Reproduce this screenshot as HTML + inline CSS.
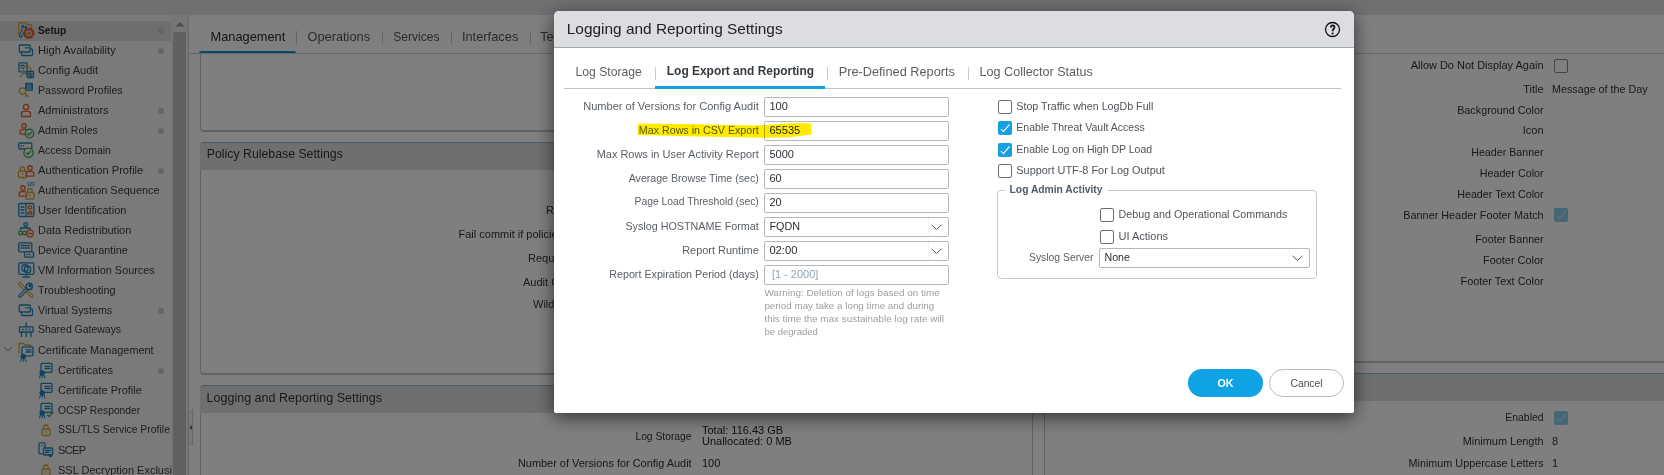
<!DOCTYPE html>
<html><head><meta charset="utf-8"><style>
html,body{margin:0;padding:0;width:1664px;height:475px;overflow:hidden;background:#fff;font-family:"Liberation Sans", sans-serif;}
.t{position:absolute;white-space:nowrap;line-height:1;}
.r{position:absolute;box-sizing:border-box;}
svg{position:absolute;overflow:visible;}
</style></head><body>
<div class="r" style="left:0px;top:0px;width:1664px;height:15px;background:#dfe1e4"></div><div class="r" style="left:0px;top:15px;width:171px;height:460px;background:#f5f5f5"></div><div class="r" style="left:0px;top:21px;width:171px;height:20px;background:#dcdcdc"></div><div class="r" style="left:171px;top:15px;width:17px;height:460px;background:#ededed"></div><div class="r" style="left:173px;top:32px;width:13px;height:443px;background:#c2c2c2"></div><svg style="left:174px;top:20px" width="12" height="8"><path d="M1.5 6.5 L6 2 L10.5 6.5 Z" fill="#999"/></svg><div class="r" style="left:188px;top:15px;width:1px;height:460px;background:#d4d4d4"></div><svg style="left:188px;top:408px" width="8" height="40"><path d="M0.5 6 L4.5 1.5 L4.5 37.5 L0.5 33.5 Z" fill="#f4f4f4" stroke="#cfcfcf"/><path d="M1.3 19.5 L4 17 L4 22 Z" fill="#666"/></svg><div style="position:absolute;left:0;top:15px;width:172px;height:460px;overflow:hidden"><div class="t" style="left:38px;top:10.67px;font-size:10.19px;color:#2b2b2b;font-weight:bold;">Setup</div><div class="r" style="left:158px;top:13.3px;width:6px;height:6px;border-radius:3px;background:#c8c8c8"></div><div class="t" style="left:38px;top:29.87px;font-size:11.14px;color:#3a3a3a;font-weight:normal;">High Availability</div><div class="r" style="left:158px;top:33.3px;width:6px;height:6px;border-radius:3px;background:#c8c8c8"></div><div class="t" style="left:38px;top:49.88px;font-size:11.13px;color:#3a3a3a;font-weight:normal;">Config Audit</div><div class="t" style="left:38px;top:70.35px;font-size:10.57px;color:#3a3a3a;font-weight:normal;">Password Profiles</div><div class="t" style="left:38px;top:89.94px;font-size:11.06px;color:#3a3a3a;font-weight:normal;">Administrators</div><div class="r" style="left:158px;top:93.3px;width:6px;height:6px;border-radius:3px;background:#c8c8c8"></div><div class="t" style="left:38px;top:110.37px;font-size:10.55px;color:#3a3a3a;font-weight:normal;">Admin Roles</div><div class="r" style="left:158px;top:113.3px;width:6px;height:6px;border-radius:3px;background:#c8c8c8"></div><div class="t" style="left:38px;top:130.40px;font-size:10.51px;color:#3a3a3a;font-weight:normal;">Access Domain</div><div class="t" style="left:38px;top:149.86px;font-size:11.15px;color:#3a3a3a;font-weight:normal;">Authentication Profile</div><div class="r" style="left:158px;top:153.3px;width:6px;height:6px;border-radius:3px;background:#c8c8c8"></div><div class="t" style="left:38px;top:170.03px;font-size:10.95px;color:#3a3a3a;font-weight:normal;">Authentication Sequence</div><div class="t" style="left:38px;top:189.95px;font-size:11.05px;color:#3a3a3a;font-weight:normal;">User Identification</div><div class="t" style="left:38px;top:210.01px;font-size:10.98px;color:#3a3a3a;font-weight:normal;">Data Redistribution</div><div class="t" style="left:38px;top:230.12px;font-size:10.84px;color:#3a3a3a;font-weight:normal;">Device Quarantine</div><div class="t" style="left:38px;top:250.07px;font-size:10.9px;color:#3a3a3a;font-weight:normal;">VM Information Sources</div><div class="t" style="left:38px;top:270.11px;font-size:10.86px;color:#3a3a3a;font-weight:normal;">Troubleshooting</div><div class="t" style="left:38px;top:290.23px;font-size:10.71px;color:#3a3a3a;font-weight:normal;">Virtual Systems</div><div class="r" style="left:158px;top:293.3px;width:6px;height:6px;border-radius:3px;background:#c8c8c8"></div><div class="t" style="left:38px;top:310.45px;font-size:10.46px;color:#3a3a3a;font-weight:normal;">Shared Gateways</div><div class="t" style="left:38px;top:330.07px;font-size:10.9px;color:#3a3a3a;font-weight:normal;">Certificate Management</div><div class="t" style="left:58px;top:349.99px;font-size:11.0px;color:#3a3a3a;font-weight:normal;">Certificates</div><div class="r" style="left:158px;top:353.3px;width:6px;height:6px;border-radius:3px;background:#c8c8c8"></div><div class="t" style="left:58px;top:369.96px;font-size:11.03px;color:#3a3a3a;font-weight:normal;">Certificate Profile</div><div class="t" style="left:58px;top:390.57px;font-size:10.31px;color:#3a3a3a;font-weight:normal;">OCSP Responder</div><div class="t" style="left:58px;top:410.46px;font-size:10.44px;color:#3a3a3a;font-weight:normal;">SSL/TLS Service Profile</div><div class="t" style="left:58px;top:429.99px;font-size:11px;color:#3a3a3a;font-weight:normal;letter-spacing:-0.6px">SCEP</div><div class="t" style="left:58px;top:449.99px;font-size:11px;color:#3a3a3a;font-weight:normal;">SSL Decryption Exclusion</div></div><div style="position:absolute;left:0;top:15px;width:172px;height:460px;overflow:hidden"><div style="position:absolute;left:0;top:-15px"><svg style="left:18px;top:21.6px" width="17" height="17" fill="none" stroke-width="1.3" stroke-linecap="round" stroke-linejoin="round"><path d="M0.6 12 V0.8 H8.2 L9.2 2.7 H13.6 V8" stroke="#d6a23a" stroke-width="1.2"/><path d="M1.2 14.2 L4.3 6.6 Q3.4 4.4 5.2 3.3 L5.6 5.2 L7 5.5 L7.6 3.9 Q9.2 5.6 7.6 7.6 L3.2 15.3 Z" stroke="#1d84bc" stroke-width="1.1" fill="#dcdcdc"/><circle cx="10.9" cy="11.2" r="4.7" stroke="#e4602c" stroke-width="2" stroke-dasharray="1.7 2.0"/><circle cx="10.9" cy="11.2" r="3.5" stroke="#e4602c" stroke-width="1.3" fill="#dcdcdc"/><circle cx="10.9" cy="11.2" r="1.2" stroke="#e4602c" stroke-width="1.1"/></svg><svg style="left:18px;top:41.6px" width="17" height="17" fill="none" stroke-width="1.3" stroke-linecap="round" stroke-linejoin="round"><rect x="1.2" y="3" width="11" height="7" rx="1" stroke="#1d84bc"/><path d="M3.5 10 V12.5 Q3.5 13.5 4.5 13.5 H13.5 Q14.5 13.5 14.5 12.5 V8 Q14.5 7 13.5 7 H12.5" stroke="#1d84bc"/><rect x="7" y="5" width="1.6" height="1.6" fill="#36a848" stroke="none"/><rect x="9.3" y="5" width="1.6" height="1.6" fill="#36a848" stroke="none"/></svg><svg style="left:18px;top:61.6px" width="17" height="17" fill="none" stroke-width="1.3" stroke-linecap="round" stroke-linejoin="round"><rect x="1" y="0.8" width="8" height="9" rx="0.8" stroke="#1d84bc"/><path d="M3 3.5 H6 M3 5.8 H5" stroke="#1d84bc"/><circle cx="9" cy="8" r="3.8" stroke="#d6a23a"/><path d="M6.2 10.8 L2.5 14.5" stroke="#d6a23a"/><rect x="9" y="9.5" width="6.5" height="6" rx="0.8" stroke="#1d84bc"/><path d="M10.8 12 H14 M10.8 14 H14" stroke="#1d84bc"/></svg><svg style="left:18px;top:81.6px" width="17" height="17" fill="none" stroke-width="1.3" stroke-linecap="round" stroke-linejoin="round"><rect x="7" y="0.8" width="8" height="8" rx="0.8" fill="#1d84bc" stroke="none"/><path d="M9 3 H13 M9 5 H13 M9 7 H13" stroke="#f5f5f5" stroke-width="0.8"/><circle cx="4.5" cy="9" r="3.2" stroke="#d6a23a"/><path d="M6.8 11.3 L10 14.5 M8.5 13 L7.3 14.2" stroke="#d6a23a"/></svg><svg style="left:18px;top:101.6px" width="17" height="17" fill="none" stroke-width="1.3" stroke-linecap="round" stroke-linejoin="round"><circle cx="8" cy="4.9" r="2.6" stroke="#e4602c"/><path d="M3.5 14.5 V11.5 Q3.5 9.3 6.0 9.3 H10.0 Q12.5 9.3 12.5 11.5 V14.5 Z" stroke="#e4602c"/></svg><svg style="left:18px;top:121.6px" width="17" height="17" fill="none" stroke-width="1.3" stroke-linecap="round" stroke-linejoin="round"><circle cx="6" cy="3.94" r="2.21" stroke="#e4602c"/><path d="M2.1750000000000003 12.1 V9.55 Q2.1750000000000003 7.68 4.3 7.68 H7.7 Q9.825 7.68 9.825 9.55 V12.1 Z" stroke="#e4602c"/><circle cx="11.5" cy="11.5" r="4.3" stroke="#36a848" fill="#f5f5f5"/><path d="M9.5 11.5 L10.9 13.1 L13.7 9.9" stroke="#36a848"/></svg><svg style="left:18px;top:141.6px" width="17" height="17" fill="none" stroke-width="1.3" stroke-linecap="round" stroke-linejoin="round"><rect x="0.8" y="1" width="13" height="6" rx="1" stroke="#1d84bc"/><path d="M2.8 3.8 H3.6 M5 3.8 H5.8" stroke="#1d84bc"/><circle cx="10.5" cy="10.8" r="4.6" stroke="#36a848" fill="#f5f5f5"/><path d="M8.5 10.8 L9.9 12.4 L12.7 9.200000000000001" stroke="#36a848"/></svg><svg style="left:18px;top:161.6px" width="17" height="17" fill="none" stroke-width="1.3" stroke-linecap="round" stroke-linejoin="round"><path d="M2.3 9 V7.6 Q2.3 5 4.5 5 Q6.7 5 6.7 7.6 V9" stroke="#d6a23a"/><rect x="0.5" y="9" width="8" height="6.5" rx="1" stroke="#d6a23a"/><circle cx="4.5" cy="12" r="0.9" fill="#d6a23a" stroke="none"/><circle cx="12" cy="5.9399999999999995" r="2.21" stroke="#e4602c"/><path d="M8.175 14.1 V11.55 Q8.175 9.68 10.3 9.68 H13.7 Q15.825 9.68 15.825 11.55 V14.1 Z" stroke="#e4602c"/></svg><svg style="left:18px;top:181.6px" width="17" height="17" fill="none" stroke-width="1.3" stroke-linecap="round" stroke-linejoin="round"><circle cx="5" cy="5.9399999999999995" r="2.21" stroke="#e4602c"/><path d="M1.1750000000000003 14.1 V11.55 Q1.1750000000000003 9.68 3.3 9.68 H6.7 Q8.825 9.68 8.825 11.55 V14.1 Z" stroke="#e4602c"/><path d="M9.8 10.5 V9.1 Q9.8 6.5 12 6.5 Q14.2 6.5 14.2 9.1 V10.5" stroke="#d6a23a"/><rect x="8" y="10.5" width="8" height="6.5" rx="1" stroke="#d6a23a"/><circle cx="12" cy="13.5" r="0.9" fill="#d6a23a" stroke="none"/><text x="9" y="4" font-size="4.5" fill="#1d84bc" font-family="Liberation Sans" stroke="none" font-weight="bold">123</text></svg><svg style="left:18px;top:201.6px" width="17" height="17" fill="none" stroke-width="1.3" stroke-linecap="round" stroke-linejoin="round"><rect x="0.8" y="1.5" width="15" height="13" rx="1" stroke="#1d84bc"/><path d="M8 1.5 V14.5 M3 5 H6 M3 8 H6 M3 11 H6" stroke="#1d84bc"/><circle cx="12" cy="5.5" r="1.7" stroke="#e4602c"/><path d="M9.8 12 Q9.8 9.5 12 9.5 Q14 9.5 14 12 H10.5" stroke="#e4602c"/></svg><svg style="left:18px;top:221.6px" width="17" height="17" fill="none" stroke-width="1.3" stroke-linecap="round" stroke-linejoin="round"><rect x="6" y="0.8" width="3.5" height="3" rx="0.6" stroke="#1d84bc"/><path d="M7.7 3.8 V6 M2.5 8 V6 H12 V8" stroke="#1d84bc"/><circle cx="2.5" cy="11" r="1.8" stroke="#36a848"/><circle cx="6.5" cy="11" r="1.8" stroke="#36a848"/><circle cx="12" cy="11.5" r="3.3" stroke="#e4602c" fill="#f5f5f5"/><path d="M10.5 11.5 H13.5" stroke="#e4602c"/></svg><svg style="left:18px;top:241.6px" width="17" height="17" fill="none" stroke-width="1.3" stroke-linecap="round" stroke-linejoin="round"><rect x="0.8" y="0.8" width="13" height="9" rx="1" stroke="#1d84bc"/><path d="M3 3.5 H11.5 M3 6 H11.5" stroke="#1d84bc" stroke-dasharray="0.9 1.1"/><rect x="6.5" y="9.8" width="9" height="5.4" rx="1" stroke="#1d84bc" fill="#f5f5f5"/><path d="M9 12.5 H9.8 M11.5 12.5 H12.3" stroke="#1d84bc"/></svg><svg style="left:18px;top:261.6px" width="17" height="17" fill="none" stroke-width="1.3" stroke-linecap="round" stroke-linejoin="round"><rect x="0.8" y="0.8" width="15" height="11.5" rx="1" stroke="#1d84bc"/><path d="M8.2 12.3 V14.5 M5 15 H11.5" stroke="#1d84bc"/><rect x="4" y="3" width="6" height="6" rx="1.5" stroke="#1d84bc"/><rect x="6.5" y="4.5" width="6" height="6" rx="1.5" stroke="#1d84bc"/></svg><svg style="left:18px;top:281.6px" width="17" height="17" fill="none" stroke-width="1.3" stroke-linecap="round" stroke-linejoin="round"><path d="M1.8 2 L13.8 14" stroke="#d6a23a" stroke-width="3.6"/><path d="M1.8 2 L13.8 14" stroke="#f5f5f5" stroke-width="1.2"/><path d="M2 14 L8.5 7.5" stroke="#1d84bc" stroke-width="3.6"/><path d="M2 14 L8.5 7.5" stroke="#f5f5f5" stroke-width="1.2"/><circle cx="11.2" cy="4.4" r="3.1" stroke="#1d84bc" stroke-width="1.5" fill="#f5f5f5"/><circle cx="12" cy="3.7" r="1.6" fill="#1d84bc" stroke="none"/></svg><svg style="left:18px;top:301.6px" width="17" height="17" fill="none" stroke-width="1.3" stroke-linecap="round" stroke-linejoin="round"><rect x="1.2" y="3" width="11" height="7" rx="1" stroke="#1d84bc"/><path d="M3.5 10 V12.5 Q3.5 13.5 4.5 13.5 H13.5 Q14.5 13.5 14.5 12.5 V8 Q14.5 7 13.5 7 H12.5" stroke="#1d84bc"/><rect x="7" y="5" width="1.6" height="1.6" fill="#36a848" stroke="none"/><rect x="9.3" y="5" width="1.6" height="1.6" fill="#36a848" stroke="none"/></svg><svg style="left:18px;top:321.6px" width="17" height="17" fill="none" stroke-width="1.3" stroke-linecap="round" stroke-linejoin="round"><path d="M8.2 0.8 V4.5 M1.5 4.8 H15 V10 H1.5 Z M3.5 10 V14.5 M8.2 10 V14.5 M13 10 V14.5" stroke="#1d84bc"/><circle cx="5" cy="7.4" r="0.9" fill="#1d84bc" stroke="none"/><circle cx="8.2" cy="7.4" r="0.9" fill="#1d84bc" stroke="none"/><circle cx="11.4" cy="7.4" r="0.9" fill="#1d84bc" stroke="none"/></svg><svg style="left:18px;top:341.6px" width="17" height="17" fill="none" stroke-width="1.3" stroke-linecap="round" stroke-linejoin="round"><path d="M1 11 V1.5 H5.5 L7 3 H12.5 V5" stroke="#d6a23a"/><rect x="4" y="4.8" width="11" height="9" rx="1" stroke="#1d84bc"/><path d="M8 7.8 H13 M8 10 H13" stroke="#1d84bc"/><circle cx="5.2" cy="14.5" r="2.7" fill="#1d84bc" stroke="none"/><path d="M3.5 16.5 L2.5 19.5 M5.2 17 V19.5 M7 16.5 L8 19.5" stroke="#1d84bc" stroke-width="1"/></svg><svg style="left:38px;top:361.6px" width="17" height="17" fill="none" stroke-width="1.3" stroke-linecap="round" stroke-linejoin="round"><rect x="3" y="1.3" width="11" height="9" rx="1" stroke="#1d84bc"/><path d="M7 4.3 H12 M7 6.5 H12" stroke="#1d84bc"/><circle cx="4.2" cy="11.0" r="2.7" fill="#1d84bc" stroke="none"/><path d="M2.5 13.0 L1.5 16.0 M4.2 13.5 V16.0 M6 13.0 L7 16.0" stroke="#1d84bc" stroke-width="1"/></svg><svg style="left:38px;top:381.6px" width="17" height="17" fill="none" stroke-width="1.3" stroke-linecap="round" stroke-linejoin="round"><rect x="3" y="1.3" width="11" height="9" rx="1" stroke="#1d84bc"/><path d="M7 4.3 H12 M7 6.5 H12" stroke="#1d84bc"/><circle cx="4.2" cy="11.0" r="2.7" fill="#1d84bc" stroke="none"/><path d="M2.5 13.0 L1.5 16.0 M4.2 13.5 V16.0 M6 13.0 L7 16.0" stroke="#1d84bc" stroke-width="1"/></svg><svg style="left:38px;top:401.6px" width="17" height="17" fill="none" stroke-width="1.3" stroke-linecap="round" stroke-linejoin="round"><rect x="3" y="1.3" width="11" height="9" rx="1" stroke="#1d84bc"/><path d="M7 4.3 H12 M7 6.5 H12" stroke="#1d84bc"/><circle cx="4.2" cy="11.0" r="2.7" fill="#1d84bc" stroke="none"/><path d="M2.5 13.0 L1.5 16.0 M4.2 13.5 V16.0 M6 13.0 L7 16.0" stroke="#1d84bc" stroke-width="1"/><path d="M9.5 13.0 L11 14.5 L15 10.5" stroke="#36a848"/></svg><svg style="left:38px;top:421.6px" width="17" height="17" fill="none" stroke-width="1.3" stroke-linecap="round" stroke-linejoin="round"><path d="M5.8 7 V5.6 Q5.8 3 8 3 Q10.2 3 10.2 5.6 V7" stroke="#d6a23a"/><rect x="4" y="7" width="8" height="6.5" rx="1" stroke="#d6a23a"/><circle cx="8" cy="10" r="0.9" fill="#d6a23a" stroke="none"/></svg><svg style="left:38px;top:441.6px" width="17" height="17" fill="none" stroke-width="1.3" stroke-linecap="round" stroke-linejoin="round"><rect x="1" y="0.8" width="6" height="11" rx="1" stroke="#1d84bc"/><circle cx="4" cy="3.5" r="0.8" fill="#1d84bc" stroke="none"/><rect x="5.5" y="6" width="9" height="7" rx="0.8" stroke="#1d84bc" fill="#f5f5f5"/><path d="M7.5 8.5 H12.5 M7.5 10.5 H11" stroke="#1d84bc"/><circle cx="12.5" cy="13.5" r="1.8" fill="#1d84bc" stroke="none"/></svg><svg style="left:38px;top:461.6px" width="17" height="17" fill="none" stroke-width="1.3" stroke-linecap="round" stroke-linejoin="round"><path d="M5.8 7 V5.6 Q5.8 3 8 3 Q10.2 3 10.2 5.6 V7" stroke="#d6a23a"/><rect x="4" y="7" width="8" height="6.5" rx="1" stroke="#d6a23a"/><circle cx="8" cy="10" r="0.9" fill="#d6a23a" stroke="none"/></svg></div></div><svg style="left:3px;top:346px" width="10" height="7"><path d="M1 1 L5 5 L9 1" fill="none" stroke="#888" stroke-width="1"/></svg><div class="t" style="left:210.5px;top:30.56px;font-size:12.8px;color:#2a2a2a;font-weight:normal;">Management</div><div class="t" style="left:307.5px;top:30.56px;font-size:12.8px;color:#555;font-weight:normal;">Operations</div><div class="t" style="left:393.2px;top:31.16px;font-size:12.1px;color:#555;font-weight:normal;">Services</div><div class="t" style="left:461.9px;top:30.51px;font-size:12.87px;color:#555;font-weight:normal;">Interfaces</div><div class="t" style="left:540.2px;top:30.56px;font-size:12.8px;color:#555;font-weight:normal;">Telemetry</div><div class="r" style="left:296px;top:31px;width:1px;height:13px;background:#c8c8c8"></div><div class="r" style="left:382px;top:31px;width:1px;height:13px;background:#c8c8c8"></div><div class="r" style="left:451px;top:31px;width:1px;height:13px;background:#c8c8c8"></div><div class="r" style="left:530px;top:31px;width:1px;height:13px;background:#c8c8c8"></div><div class="r" style="left:189px;top:53px;width:1475px;height:1px;background:#d0d0d0"></div><div class="r" style="left:199px;top:51px;width:97px;height:2px;background:#1391d0;border-radius:2px 2px 0 0"></div><div class="r" style="left:200px;top:54px;width:833px;height:78px;border:1px solid #c4c4c4;border-top:none;border-radius:0 0 4px 4px;border-bottom-width:2px"></div><div class="r" style="left:200px;top:142px;width:833px;height:233px;border:1px solid #c4c4c4;border-radius:4px;border-bottom-width:2px"></div><div class="r" style="left:200px;top:142px;width:833px;height:28px;background:#dcdee2;border-top:1px solid #98b8cc;border-radius:4px 4px 0 0"></div><div class="t" style="left:206.8px;top:148.49px;font-size:12.3px;color:#333;font-weight:normal;">Policy Rulebase Settings</div><div class="t" style="left:458.5px;top:228.79px;font-size:11px;color:#333;font-weight:normal;">Fail commit if policies</div><div class="t" style="left:546px;top:204.79px;font-size:11px;color:#333;font-weight:normal;">Rule</div><div class="t" style="left:528px;top:252.79px;font-size:11px;color:#333;font-weight:normal;">Require</div><div class="t" style="left:523px;top:276.79px;font-size:11px;color:#333;font-weight:normal;">Audit Comment</div><div class="t" style="left:533px;top:298.79px;font-size:11px;color:#333;font-weight:normal;">Wildcard</div><div class="r" style="left:200px;top:385px;width:833px;height:120px;border:1px solid #c4c4c4;border-radius:4px"></div><div class="r" style="left:200px;top:385px;width:833px;height:28px;background:#dcdee2;border-top:1px solid #98b8cc;border-radius:4px 4px 0 0"></div><div class="t" style="left:206.6px;top:391.69px;font-size:12.53px;color:#333;font-weight:normal;">Logging and Reporting Settings</div><div class="t" style="left:91.60000000000002px;width:600px;text-align:right;top:431.66px;font-size:10.32px;color:#333;font-weight:normal;">Log Storage</div><div class="t" style="left:702px;top:425.49px;font-size:11px;color:#222;font-weight:normal;">Total: 116.43 GB</div><div class="t" style="left:702px;top:436.29px;font-size:11px;color:#222;font-weight:normal;">Unallocated: 0 MB</div><div class="t" style="left:91.60000000000002px;width:600px;text-align:right;top:458.35px;font-size:10.93px;color:#333;font-weight:normal;">Number of Versions for Config Audit</div><div class="t" style="left:702px;top:458.29px;font-size:11px;color:#222;font-weight:normal;">100</div><div class="r" style="left:1044px;top:54px;width:640px;height:309px;border:1px solid #c4c4c4;border-top:none;border-bottom-width:2px"></div><div class="t" style="left:943.5999999999999px;width:600px;text-align:right;top:59.91px;font-size:10.98px;color:#333;font-weight:normal;">Allow Do Not Display Again</div><div class="r" style="left:1554px;top:59px;width:14px;height:14px;border:1px solid #888;border-radius:2px;background:#fff"></div><div class="t" style="left:943.5999999999999px;width:600px;text-align:right;top:83.89px;font-size:11px;color:#333;font-weight:normal;">Title</div><div class="t" style="left:1552px;top:84.10px;font-size:10.75px;color:#333;font-weight:normal;">Message of the Day</div><div class="t" style="left:943.5999999999999px;width:600px;text-align:right;top:105.25px;font-size:10.81px;color:#333;font-weight:normal;">Background Color</div><div class="t" style="left:943.5999999999999px;width:600px;text-align:right;top:125.44px;font-size:11.06px;color:#333;font-weight:normal;">Icon</div><div class="t" style="left:943.5999999999999px;width:600px;text-align:right;top:147.16px;font-size:10.68px;color:#333;font-weight:normal;">Header Banner</div><div class="t" style="left:943.5999999999999px;width:600px;text-align:right;top:167.89px;font-size:10.76px;color:#333;font-weight:normal;">Header Color</div><div class="t" style="left:943.5999999999999px;width:600px;text-align:right;top:188.89px;font-size:10.76px;color:#333;font-weight:normal;">Header Text Color</div><div class="t" style="left:943.5999999999999px;width:600px;text-align:right;top:209.92px;font-size:10.84px;color:#333;font-weight:normal;">Banner Header Footer Match</div><div class="r" style="left:1554px;top:208px;width:14px;height:14px;border-radius:2px;background:#8ccbec"></div><svg style="left:1554px;top:208px" width="14" height="14"><path d="M3 8.3 L5.5 10.6 L11.8 3.1" fill="none" stroke="#f0f0f0" stroke-width="1"/></svg><div class="t" style="left:943.5999999999999px;width:600px;text-align:right;top:233.95px;font-size:10.69px;color:#333;font-weight:normal;">Footer Banner</div><div class="t" style="left:943.5999999999999px;width:600px;text-align:right;top:254.77px;font-size:10.9px;color:#333;font-weight:normal;">Footer Color</div><div class="t" style="left:943.5999999999999px;width:600px;text-align:right;top:275.60px;font-size:10.87px;color:#333;font-weight:normal;">Footer Text Color</div><div class="r" style="left:1044px;top:373px;width:640px;height:110px;border:1px solid #c4c4c4;border-radius:4px"></div><div class="r" style="left:1044px;top:373px;width:640px;height:28px;background:#dcdee2;border-top:1px solid #98b8cc;border-radius:4px 4px 0 0"></div><div class="t" style="left:943.5999999999999px;width:600px;text-align:right;top:413.16px;font-size:10.44px;color:#333;font-weight:normal;">Enabled</div><div class="r" style="left:1554px;top:411px;width:14px;height:14px;border-radius:2px;background:#8ccbec"></div><svg style="left:1554px;top:411px" width="14" height="14"><path d="M3 8.3 L5.5 10.6 L11.8 3.1" fill="none" stroke="#f0f0f0" stroke-width="1"/></svg><div class="t" style="left:943.5999999999999px;width:600px;text-align:right;top:436.42px;font-size:10.96px;color:#333;font-weight:normal;">Minimum Length</div><div class="t" style="left:1552px;top:436.39px;font-size:11px;color:#333;font-weight:normal;">8</div><div class="t" style="left:943.5999999999999px;width:600px;text-align:right;top:457.86px;font-size:10.8px;color:#333;font-weight:normal;">Minimum Uppercase Letters</div><div class="t" style="left:1552px;top:457.69px;font-size:11px;color:#333;font-weight:normal;">1</div><div class="r" style="left:0px;top:0px;width:1664px;height:475px;background:rgba(0,0,0,0.5)"></div><div class="r" style="left:554px;top:11px;width:800px;height:402px;background:#fff;border-radius:5px 5px 2px 2px;box-shadow:0 4px 18px rgba(0,0,0,0.6)"></div><div class="r" style="left:554px;top:11px;width:800px;height:37px;background:#dcdde0;border-bottom:1px solid #a3a7ab;border-radius:5px 5px 0 0"></div><div class="t" style="left:566.8px;top:20.85px;font-size:15.42px;color:#222;font-weight:normal;">Logging and Reporting Settings</div><svg style="left:1324px;top:21px" width="17" height="17"><circle cx="8.5" cy="8.5" r="7" fill="none" stroke="#111" stroke-width="1.3"/><path d="M6.9 6.6 Q6.9 4.3 8.6 4.3 Q10.4 4.3 10.4 6.2 Q10.4 7.5 9.4 8.2 Q8.6 8.8 8.6 10.3" fill="none" stroke="#111" stroke-width="1.8"/><circle cx="8.6" cy="12.5" r="1.05" fill="#111"/></svg><div class="t" style="left:575.6px;top:66.20px;font-size:12.17px;color:#5a5f66;font-weight:normal;">Log Storage</div><div class="r" style="left:655px;top:67px;width:1px;height:13px;background:#c8ccd0"></div><div class="t" style="left:666.8px;top:66.39px;font-size:11.94px;color:#333a40;font-weight:bold;">Log Export and Reporting</div><div class="r" style="left:827px;top:67px;width:1px;height:13px;background:#c8ccd0"></div><div class="t" style="left:838.7px;top:65.71px;font-size:12.75px;color:#5a5f66;font-weight:normal;">Pre-Defined Reports</div><div class="r" style="left:968px;top:67px;width:1px;height:13px;background:#c8ccd0"></div><div class="t" style="left:979.6px;top:65.85px;font-size:12.58px;color:#5a5f66;font-weight:normal;">Log Collector Status</div><div class="r" style="left:564px;top:88px;width:777px;height:1px;background:#c0c4c8"></div><div class="r" style="left:655px;top:86px;width:170px;height:3px;background:#0fa0e0"></div><div class="t" style="left:158.79999999999995px;width:600px;text-align:right;top:100.85px;font-size:11.05px;color:#5a6066;font-weight:normal;">Number of Versions for Config Audit</div><div class="r" style="left:764px;top:97px;width:185px;height:20px;border:1px solid #b4b8bc;border-radius:2px;background:#fff"></div><div class="t" style="left:769.4px;top:100.89px;font-size:11px;color:#2a2e33;font-weight:normal;">100</div><div class="t" style="left:158.79999999999995px;width:600px;text-align:right;top:125.14px;font-size:10.7px;color:#5a6066;font-weight:normal;">Max Rows in CSV Export</div><div class="r" style="left:764px;top:121px;width:185px;height:20px;border:1px solid #b4b8bc;border-radius:2px;background:#fff"></div><div class="t" style="left:769.4px;top:124.80px;font-size:11.11px;color:#2a2e33;font-weight:normal;">65535</div><div class="t" style="left:158.79999999999995px;width:600px;text-align:right;top:148.91px;font-size:10.97px;color:#5a6066;font-weight:normal;">Max Rows in User Activity Report</div><div class="r" style="left:764px;top:145px;width:185px;height:20px;border:1px solid #b4b8bc;border-radius:2px;background:#fff"></div><div class="t" style="left:769.4px;top:148.89px;font-size:11px;color:#2a2e33;font-weight:normal;">5000</div><div class="t" style="left:158.79999999999995px;width:600px;text-align:right;top:173.21px;font-size:10.62px;color:#5a6066;font-weight:normal;">Average Browse Time (sec)</div><div class="r" style="left:764px;top:169px;width:185px;height:20px;border:1px solid #b4b8bc;border-radius:2px;background:#fff"></div><div class="t" style="left:769.4px;top:172.89px;font-size:11px;color:#2a2e33;font-weight:normal;">60</div><div class="t" style="left:158.79999999999995px;width:600px;text-align:right;top:197.46px;font-size:10.32px;color:#5a6066;font-weight:normal;">Page Load Threshold (sec)</div><div class="r" style="left:764px;top:193px;width:185px;height:20px;border:1px solid #b4b8bc;border-radius:2px;background:#fff"></div><div class="t" style="left:769.4px;top:196.89px;font-size:11px;color:#2a2e33;font-weight:normal;">20</div><div class="t" style="left:158.79999999999995px;width:600px;text-align:right;top:221.08px;font-size:10.77px;color:#5a6066;font-weight:normal;">Syslog HOSTNAME Format</div><div class="r" style="left:764px;top:217px;width:185px;height:20px;border:1px solid #b4b8bc;border-radius:2px;background:#fff"></div><div class="t" style="left:769.4px;top:221.06px;font-size:10.8px;color:#2a2e33;font-weight:normal;">FQDN</div><div class="r" style="left:928px;top:218px;width:1px;height:18px;background:#f3f4f5"></div><svg style="left:931px;top:224px" width="12" height="7"><path d="M0.5 0.8 L5.5 5.5 L10.5 0.8" fill="none" stroke="#555" stroke-width="1"/></svg><div class="t" style="left:158.79999999999995px;width:600px;text-align:right;top:244.93px;font-size:10.95px;color:#5a6066;font-weight:normal;">Report Runtime</div><div class="r" style="left:764px;top:241px;width:185px;height:20px;border:1px solid #b4b8bc;border-radius:2px;background:#fff"></div><div class="t" style="left:769.4px;top:244.73px;font-size:11.19px;color:#2a2e33;font-weight:normal;">02:00</div><div class="r" style="left:928px;top:242px;width:1px;height:18px;background:#f3f4f5"></div><svg style="left:931px;top:248px" width="12" height="7"><path d="M0.5 0.8 L5.5 5.5 L10.5 0.8" fill="none" stroke="#555" stroke-width="1"/></svg><div class="t" style="left:158.79999999999995px;width:600px;text-align:right;top:269.13px;font-size:10.72px;color:#5a6066;font-weight:normal;">Report Expiration Period (days)</div><div class="r" style="left:764px;top:265px;width:185px;height:20px;border:1px solid #b4b8bc;border-radius:2px;background:#fff"></div><div class="t" style="left:771.9px;top:268.89px;font-size:11px;color:#8fa3b3;font-weight:normal;">[1 - 2000]</div><div class="t" style="left:764.4px;top:287.90px;font-size:9.92px;color:#9a9ea3;font-weight:normal;">Warning: Deletion of logs based on time</div><div class="t" style="left:764.4px;top:300.98px;font-size:9.83px;color:#9a9ea3;font-weight:normal;">period may take a long time and during</div><div class="t" style="left:764.4px;top:313.92px;font-size:9.9px;color:#9a9ea3;font-weight:normal;">this time the max sustainable log rate will</div><div class="t" style="left:764.4px;top:327.22px;font-size:9.54px;color:#9a9ea3;font-weight:normal;">be degraded</div><div class="r" style="left:998px;top:100px;width:14px;height:14px;border:1px solid #6a6e72;border-radius:2px;background:#fff"></div><div class="t" style="left:1016.3px;top:101.25px;font-size:10.69px;color:#50555a;font-weight:normal;">Stop Traffic when LogDb Full</div><div class="r" style="left:998px;top:121px;width:14px;height:14px;border-radius:2px;background:#16a0e0"></div><svg style="left:998px;top:121px" width="14" height="14"><path d="M3 8 L5.4 10.6 L11.6 3.4" fill="none" stroke="#fff" stroke-width="1.1"/></svg><div class="t" style="left:1016.3px;top:122.38px;font-size:10.54px;color:#50555a;font-weight:normal;">Enable Threat Vault Access</div><div class="r" style="left:998px;top:143px;width:14px;height:14px;border-radius:2px;background:#16a0e0"></div><svg style="left:998px;top:143px" width="14" height="14"><path d="M3 8 L5.4 10.6 L11.6 3.4" fill="none" stroke="#fff" stroke-width="1.1"/></svg><div class="t" style="left:1016.3px;top:144.40px;font-size:10.51px;color:#50555a;font-weight:normal;">Enable Log on High DP Load</div><div class="r" style="left:998px;top:164px;width:14px;height:14px;border:1px solid #6a6e72;border-radius:2px;background:#fff"></div><div class="t" style="left:1016.3px;top:165.06px;font-size:10.92px;color:#50555a;font-weight:normal;">Support UTF-8 For Log Output</div><div class="r" style="left:997px;top:190px;width:320px;height:89px;border:1px solid #c4c8cc;border-radius:4px"></div><div class="r" style="left:1005px;top:182px;width:103px;height:14px;background:#fff"></div><div class="t" style="left:1009.6px;top:184.79px;font-size:10.29px;color:#4d5c68;font-weight:bold;">Log Admin Activity</div><div class="r" style="left:1100px;top:208px;width:14px;height:14px;border:1px solid #6a6e72;border-radius:2px;background:#fff"></div><div class="t" style="left:1118.5px;top:209.21px;font-size:10.74px;color:#50555a;font-weight:normal;">Debug and Operational Commands</div><div class="r" style="left:1100px;top:230px;width:14px;height:14px;border:1px solid #6a6e72;border-radius:2px;background:#fff"></div><div class="t" style="left:1118.5px;top:230.99px;font-size:11.0px;color:#50555a;font-weight:normal;">UI Actions</div><div class="t" style="left:493.5px;width:600px;text-align:right;top:252.73px;font-size:10.36px;color:#5a6066;font-weight:normal;">Syslog Server</div><div class="r" style="left:1099px;top:248px;width:211px;height:20px;border:1px solid #b4b8bc;border-radius:2px;background:#fff"></div><div class="t" style="left:1104.5px;top:252.47px;font-size:10.67px;color:#2a2e33;font-weight:normal;">None</div><div class="r" style="left:1289px;top:249px;width:1px;height:18px;background:#f3f4f5"></div><svg style="left:1292px;top:255px" width="12" height="7"><path d="M0.5 0.8 L5.5 5.5 L10.5 0.8" fill="none" stroke="#555" stroke-width="1"/></svg><div class="r" style="left:1188px;top:369px;width:75px;height:28px;background:#0fa3e6;border-radius:14px"></div><div class="t" style="left:925.5px;width:600px;text-align:center;top:378.27px;font-size:10.67px;color:#fff;font-weight:bold;">OK</div><div class="r" style="left:1269px;top:369px;width:75px;height:28px;border:1px solid #b9bcbf;border-radius:14px;background:#fff"></div><div class="t" style="left:1006.5px;width:600px;text-align:center;top:379.20px;font-size:10.28px;color:#4a4f55;font-weight:normal;">Cancel</div><svg style="left:0;top:0;mix-blend-mode:multiply" width="1664" height="475"><path d="M637.8 123.6 L687 124 L756 125.5 L780 124 L795 123 L811.5 123.6 L811.5 134.4 L790 137.3 L765 137.8 L676 136 L637.8 135 Z" fill="#ffea00"/></svg>
</body></html>
